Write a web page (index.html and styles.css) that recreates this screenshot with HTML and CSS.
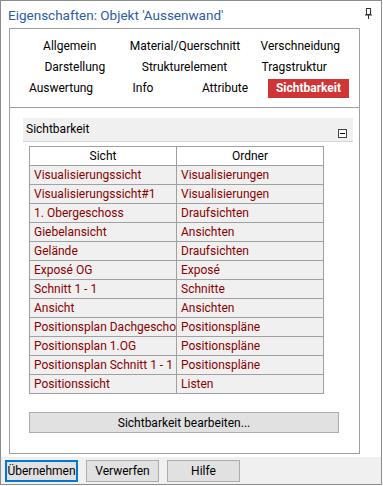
FILE: index.html
```html
<!DOCTYPE html>
<html lang="de">
<head>
    <meta charset="UTF-8">
    <meta name="viewport" content="width=device-width, initial-scale=1.0">
    <title>Eigenschaften</title>
    <link rel="stylesheet" href="styles.css">
</head>
<body>
    <div class="window">
        <div class="titlebar">
            <span class="titlebar__text">Eigenschaften: Objekt 'Aussenwand'</span>
            <svg class="pin" width="7" height="11" viewBox="0 0 7 11" xmlns="http://www.w3.org/2000/svg">
                <rect x="1.5" y="0.5" width="4" height="6" fill="none" stroke="#333" />
                <line x1="0" y1="7" x2="7" y2="7" stroke="#333" />
                <line x1="3.5" y1="7" x2="3.5" y2="11" stroke="#333" />
            </svg>
        </div>

        <div class="panel">
            <div class="tabs">
                <div class="tab-row tab-row--first">
                    <span class="tab">Allgemein</span>
                    <span class="tab">Material/Querschnitt</span>
                    <span class="tab">Verschneidung</span>
                </div>
                <div class="tab-row">
                    <span class="tab">Darstellung</span>
                    <span class="tab">Strukturelement</span>
                    <span class="tab">Tragstruktur</span>
                </div>
                <div class="tab-row">
                    <span class="tab">Auswertung</span>
                    <span class="tab">Info</span>
                    <span class="tab">Attribute</span>
                    <span class="tab tab--active">Sichtbarkeit</span>
                </div>
            </div>

            <div class="page">
                <div class="section-head">
                    <span>Sichtbarkeit</span>
                    <span class="collapse"></span>
                </div>

                <table class="views">
                    <thead>
                        <tr><th>Sicht</th><th>Ordner</th></tr>
                    </thead>
                    <tbody>
                        <tr><td>Visualisierungssicht</td><td>Visualisierungen</td></tr>
                        <tr><td>Visualisierungssicht#1</td><td>Visualisierungen</td></tr>
                        <tr><td>1. Obergeschoss</td><td>Draufsichten</td></tr>
                        <tr><td>Giebelansicht</td><td>Ansichten</td></tr>
                        <tr><td>Gelände</td><td>Draufsichten</td></tr>
                        <tr><td>Exposé OG</td><td>Exposé</td></tr>
                        <tr><td>Schnitt 1 - 1</td><td>Schnitte</td></tr>
                        <tr><td>Ansicht</td><td>Ansichten</td></tr>
                        <tr><td>Positionsplan Dachgescho</td><td>Positionspläne</td></tr>
                        <tr><td>Positionsplan 1.OG</td><td>Positionspläne</td></tr>
                        <tr><td>Positionsplan Schnitt 1 - 1</td><td>Positionspläne</td></tr>
                        <tr><td>Positionssicht</td><td>Listen</td></tr>
                    </tbody>
                </table>

                <button class="edit-btn">Sichtbarkeit bearbeiten...</button>
            </div>
        </div>

        <div class="footer">
            <button class="btn btn--default">Übernehmen</button>
            <button class="btn">Verwerfen</button>
            <button class="btn">Hilfe</button>
        </div>
    </div>
</body>
</html>
```

FILE: styles.css
```css
* {
	box-sizing: border-box;
	margin: 0;
	padding: 0;
}

:root {
	--line: #a0a0a0;
	--face: #f0f0f0;
	--button: #e1e1e1;
	--button-line: #adadad;
	--red: #8b0000;
}

body {
	font-family: Roboto, "Noto Sans", sans-serif;
	font-size: 12px;
	color: #000;
	background: #fff;
}

.window {
	width: 382px;
	height: 485px;
	border: 1px solid #8c8c8c;
	display: flex;
	flex-direction: column;
	background: #fff;
}

/* title */
.titlebar {
	height: 27px;
	display: flex;
	align-items: center;
	justify-content: space-between;
	padding: 0 9px 0 7px;
}

.titlebar__text {
	font-size: 13.5px;
	color: #2b5ca8;
}

.pin {
	display: block;
	margin-top: -2px;
}

/* tab control */
.panel {
	margin-left: 8px;
	width: 351px;
	height: 426px;
	border: 1px solid var(--line);
}

.tabs {
	padding: 8px 0 9px;
	border-bottom: 1px solid var(--line);
	display: flex;
	flex-direction: column;
	gap: 2px;
}

.tab-row {
	display: flex;
	padding: 0 10px;
}

.tab-row--first {
	padding: 0 1px 0 2px;
}

.tab {
	flex: 1;
	text-align: center;
	line-height: 19px;
	white-space: nowrap;
}

.tab--active {
	flex: 0 0 81px;
	margin-left: 2px;
	background: #d03434;
	color: #fff;
	font-weight: bold;
}

/* page */
.page {
	padding: 10px 6px 0 13px;
}

.section-head {
	height: 24px;
	background: var(--face);
	border-bottom: 1px solid #d4d4d4;
	display: flex;
	justify-content: space-between;
	padding: 0 6px 0 3px;
	line-height: 22px;
}

.collapse {
	position: relative;
	width: 9px;
	height: 9px;
	margin-top: 11px;
	border: 1px solid #444;
	background: #fff;
}

.collapse::after {
	content: '';
	position: absolute;
	left: 1px;
	right: 1px;
	top: 3px;
	height: 1px;
	background: #000;
}

.views {
	margin: 4px 0 0 6px;
	width: 295px;
	table-layout: fixed;
	border-collapse: collapse;
}

.views th,
.views td {
	height: 19px;
	border: 1px solid var(--line);
	white-space: nowrap;
	overflow: hidden;
	padding: 0 0 0 4px;
	line-height: 17px;
}

.views th {
	font-weight: normal;
	text-align: center;
	padding: 0;
	background: #fff;
}

.views td {
	background: var(--face);
	color: var(--red);
}

.edit-btn {
	display: block;
	margin: 18px 0 0 6px;
	width: 310px;
	height: 21px;
	font: inherit;
	background: var(--button);
	border: 1px solid var(--button-line);
}

/* footer buttons */
.footer {
	margin-top: auto;
	height: 27px;
	background: var(--face);
	display: flex;
	align-items: center;
	gap: 8px;
	padding: 0 0 0 4px;
}

.btn {
	width: 73px;
	height: 22px;
	font: inherit;
	background: var(--button);
	border: 1px solid var(--button-line);
}

.btn--default {
	border: 2px solid #0078d7;
}
```
